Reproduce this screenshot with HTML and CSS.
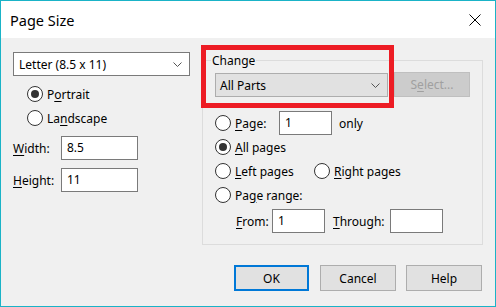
FILE: index.html
```html
<!DOCTYPE html>
<html lang="en">
<head>
  <meta charset="utf-8">
  <title>Page Size</title>
  <link rel="stylesheet" href="styles.css">
</head>
<body>

<div class="window">
  <div class="titlebar">
    <span class="title">Page Size</span>
    <svg class="close" width="12" height="12" viewBox="0 0 12 12">
      <path d="M0.5 0.5 L11.5 11.5 M11.5 0.5 L0.5 11.5" stroke="#000" stroke-width="1" fill="none"/>
    </svg>
  </div>

  <div class="content">
    <div class="panes">
      <!-- left column: paper size and orientation -->
      <div class="leftCol">
        <div class="combo white">
          <span>Letter (8.5 x 11)</span>
          <svg class="chev" width="9" height="5" viewBox="0 0 9 5"><path d="M0.5 0.5 L4.5 4.5 L8.5 0.5" stroke="#555" fill="none"/></svg>
        </div>
        <div class="radios">
          <div class="radioRow"><span class="radio checked"></span><span>P<u>o</u>rtrait</span></div>
          <div class="radioRow"><span class="radio"></span><span>La<u>n</u>dscape</span></div>
        </div>
        <div class="field first">
          <span class="fieldLabel"><u>W</u>idth:</span>
          <div class="input wide">8.5</div>
        </div>
        <div class="field">
          <span class="fieldLabel"><u>H</u>eight:</span>
          <div class="input wide">11</div>
        </div>
      </div>

      <!-- right column: which pages to change -->
      <fieldset class="group">
        <legend>Change</legend>
        <div class="changeRow">
          <div class="combo gray">
            <span>All Parts</span>
            <svg class="chev" width="9" height="5" viewBox="0 0 9 5"><path d="M0.5 0.5 L4.5 4.5 L8.5 0.5" stroke="#555" fill="none"/></svg>
          </div>
          <div class="btn disabled">S<u>e</u>lect...</div>
        </div>
        <div class="pageRows">
          <div class="radioRow">
            <span class="radio"></span><span class="pageLabel"><u>P</u>age:</span>
            <div class="input small">1</div><span class="only">only</span>
          </div>
          <div class="radioRow"><span class="radio checked"></span><span><u>A</u>ll pages</span></div>
          <div class="radioRow">
            <div class="leftPages"><span class="radio"></span><span><u>L</u>eft pages</span></div>
            <span class="radio"></span><span><u>R</u>ight pages</span>
          </div>
          <div class="radioRow"><span class="radio"></span><span>Pa<u>g</u>e range:</span></div>
          <div class="rangeRow">
            <span class="fromLabel"><u>F</u>rom:</span>
            <div class="input small">1</div>
            <span class="throughLabel"><u>T</u>hrough:</span>
            <div class="input small"></div>
          </div>
        </div>
      </fieldset>
    </div>

    <div class="footer">
      <div class="btn default">OK</div>
      <div class="btn">Cancel</div>
      <div class="btn">Help</div>
    </div>
  </div>

  <div class="highlight"></div>
</div>

</body>
</html>
```

FILE: styles.css
```css
html, body {
  margin: 0;
  padding: 0;
  background: #f0f0f0;
}

body {
  font-family: "Noto Sans", "Segoe UI", sans-serif;
  font-size: 12px;
  color: #000;
}

u {
  text-decoration: underline;
  text-underline-offset: 2px;
}

.window {
  position: relative;
  width: 496px;
  height: 307px;
  box-sizing: border-box;
  border: 1px solid #1ab3c7;
  background: #f0f0f0;
}

.titlebar {
  height: 37px;
  background: #fff;
  display: flex;
  align-items: center;
  justify-content: space-between;
  padding: 0 14px 0 9px;
}

.title {
  font-size: 14.5px;
  margin-top: 1px;
}

.close {
  display: block;
  margin-top: 1px;
}

.panes {
  display: flex;
}

/* left column */
.leftCol {
  width: 177px;
  margin: 14px 0 0 12px;
}

.combo {
  height: 24px;
  box-sizing: border-box;
  display: flex;
  align-items: center;
  justify-content: space-between;
  padding: 0 5px 0 5px;
}

.combo.white {
  background: #fff;
  border: 1px solid #7a7a7a;
}

.combo.gray {
  width: 173px;
  background: #e1e1e1;
  border: 1px solid #adadad;
  padding-left: 4px;
}

.chev {
  display: block;
  margin-right: 2px;
}

.radios {
  margin-top: 6px;
  padding-left: 14px;
}

.radioRow {
  height: 24px;
  display: flex;
  align-items: center;
}

.radio {
  width: 14px;
  height: 14px;
  border: 1px solid #333;
  border-radius: 50%;
  background: #fff;
  margin-right: 4px;
  position: relative;
  flex: none;
}

.radio.checked::after {
  content: "";
  position: absolute;
  left: 3px;
  top: 3px;
  width: 8px;
  height: 8px;
  border-radius: 50%;
  background: #333;
}

.field {
  display: flex;
  align-items: center;
  margin-top: 8px;
}

.field.first {
  margin-top: 6px;
}

.fieldLabel {
  width: 48px;
}

.input {
  height: 24px;
  box-sizing: border-box;
  border: 1px solid #7a7a7a;
  background: #fff;
  padding-left: 5px;
  line-height: 21px;
}

.input.wide {
  width: 77px;
}

.input.small {
  width: 53px;
}

/* right column */
.group {
  margin: 14px 0 0 12px;
  width: 281px;
  box-sizing: border-box;
  border: 1px solid #dcdcdc;
  padding: 3px 12px 11px 12px;
}

.group legend {
  padding: 0 1px;
  margin-left: -4px;
  line-height: 17px;
}

.changeRow {
  display: flex;
  align-items: flex-end;
}

.btn {
  width: 76px;
  height: 26px;
  box-sizing: border-box;
  border: 1px solid #adadad;
  background: #e1e1e1;
  display: flex;
  align-items: center;
  justify-content: center;
}

.btn.disabled {
  margin-left: 6px;
  height: 25px;
  background: #cccccc;
  border-color: #bfbfbf;
  color: #a0a0a0;
}

.pageRows {
  margin-top: 14px;
}

.pageLabel {
  width: 44px;
}

.only {
  margin-left: 7px;
}

.leftPages {
  display: flex;
  align-items: center;
  width: 99px;
}

.rangeRow {
  display: flex;
  align-items: center;
  margin-top: 2px;
  padding-left: 21px;
}

.fromLabel {
  width: 36px;
}

.throughLabel {
  margin-left: 8px;
  width: 57px;
}

.footer {
  display: flex;
  justify-content: flex-end;
  gap: 10px;
  padding: 20px 13px 0 0;
}

.btn.default {
  width: 75px;
  border: 2px solid #0078d7;
  margin-right: 1px;
}

/* red annotation drawn over the dialog */
.highlight {
  position: absolute;
  left: 200px;
  top: 44px;
  width: 193px;
  height: 63px;
  box-sizing: border-box;
  border: 5px solid #ed1c24;
}
```
